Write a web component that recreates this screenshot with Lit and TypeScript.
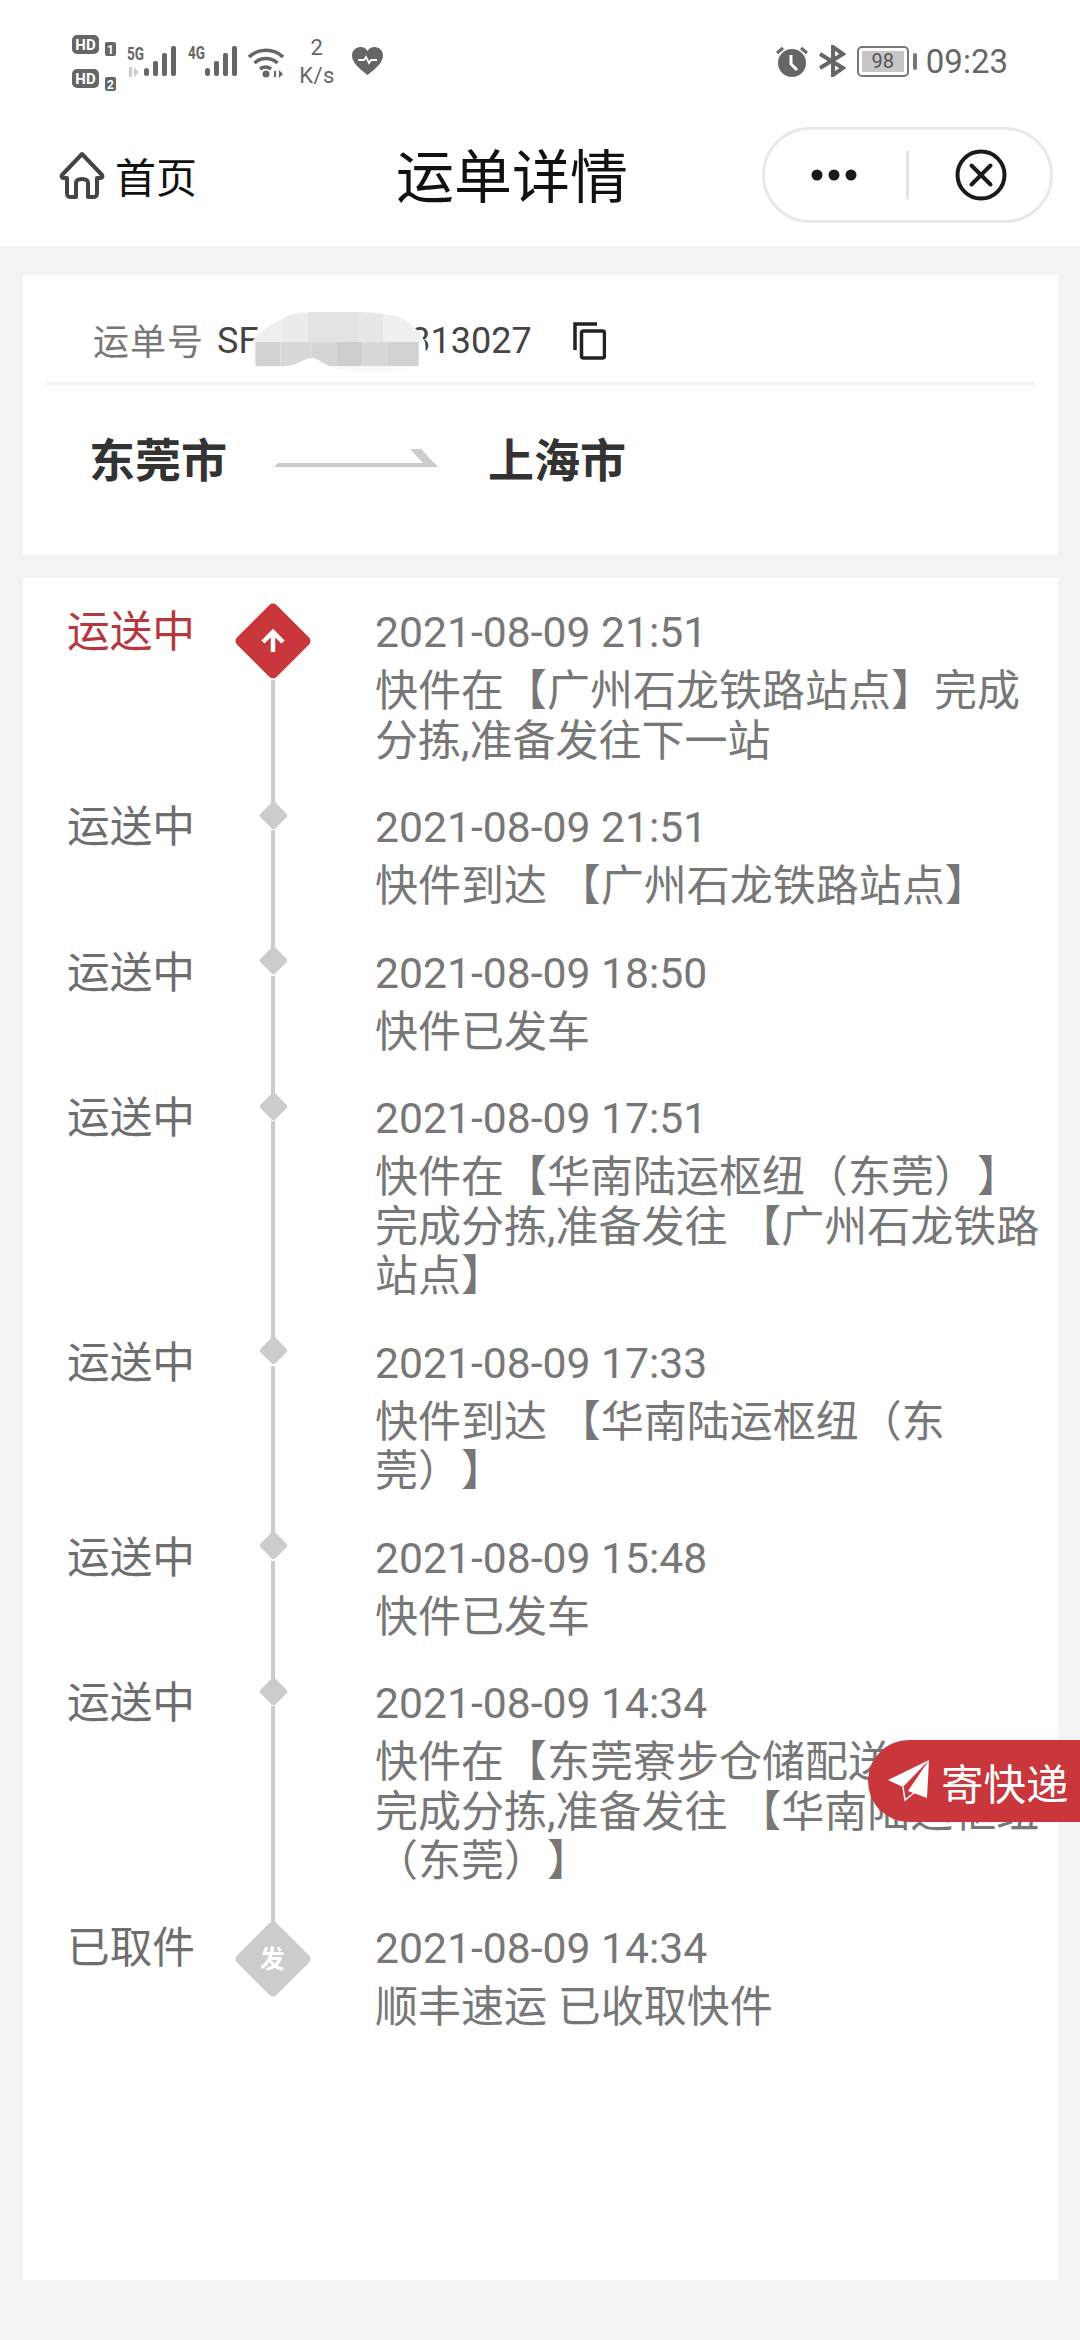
import { LitElement, html, css, svg } from "lit";
import { customElement } from "lit/decorators.js";

type Step = { status: string; time: string; desc: string; kind?: "active" | "origin" };

const STEPS: Step[] = [
  { status: "运送中", time: "2021-08-09 21:51", desc: "快件在【广州石龙铁路站点】完成分拣,准备发往下一站", kind: "active" },
  { status: "运送中", time: "2021-08-09 21:51", desc: "快件到达 【广州石龙铁路站点】" },
  { status: "运送中", time: "2021-08-09 18:50", desc: "快件已发车" },
  { status: "运送中", time: "2021-08-09 17:51", desc: "快件在【华南陆运枢纽（东莞）】完成分拣,准备发往 【广州石龙铁路站点】" },
  { status: "运送中", time: "2021-08-09 17:33", desc: "快件到达 【华南陆运枢纽（东莞）】" },
  { status: "运送中", time: "2021-08-09 15:48", desc: "快件已发车" },
  { status: "运送中", time: "2021-08-09 14:34", desc: "快件在【东莞寮步仓储配送中心】完成分拣,准备发往 【华南陆运枢纽（东莞）】" },
  { status: "已取件", time: "2021-08-09 14:34", desc: "顺丰速运 已收取快件", kind: "origin" },
];

const bars = () => svg`
  <rect x="0" y="22" width="5" height="8" rx="2.500"/>
  <rect x="9" y="15" width="5" height="15" rx="2"/>
  <rect x="18" y="7" width="5" height="23" rx="2"/>
  <rect x="27" y="0" width="5" height="30" rx="2"/>`;

@customElement("app-root")
export class AppRoot extends LitElement {
  static styles = css`
    :host {
      display: block;
      position: relative;
      width: 1080px;
      height: 2340px;
      overflow: hidden;
      background: #f3f3f3;
      font-family: Roboto, "Noto Sans CJK SC", sans-serif;
      text-spacing-trim: space-all;
    }
    .top { background: #fff; height: 246px; }
    .status {
      height: 110px;
      display: flex;
      align-items: flex-start;
      padding-left: 71px;
      box-sizing: border-box;
      color: #666;
    }
    .status svg { display: block; flex: none; fill: #666; }
    .sims { margin-top: 34px; }
    .wifi { margin: 45px 0 0 9px; }
    .speed {
      width: 60px;
      margin: 34px 0 0 3px;
      text-align: center;
      font-size: 22px;
      line-height: 28px;
      letter-spacing: 0.5px;
    }
    .heart { margin: 47px 0 0 5px; }
    .status-right { margin-left: auto; margin-right: 72px; display: flex; align-items: center; height: 122px; }
    .alarm { margin-right: 11px; }
    .bt { margin-right: 11px; }
    .battery {
      width: 52px;
      height: 31px;
      box-sizing: border-box;
      border: 2.5px solid #777;
      border-radius: 5px;
      padding: 3px;
      display: flex;
    }
    .battery span {
      flex: 1;
      background: #c6c6c6;
      border-radius: 1px;
      font-size: 20px;
      line-height: 20px;
      text-align: center;
      color: #555;
    }
    .nub { width: 4px; height: 17px; background: #777; border-radius: 2px; margin: 0 9px 0 4px; }
    .clock { font-size: 33px; color: #666; }

    .nav { height: 136px; display: flex; align-items: center; padding-left: 59px; }
    .home {
      display: flex;
      align-items: center;
      gap: 10px;
      width: 138px;
      font-size: 41px;
      color: #111;
      margin-bottom: 6px;
    }
    .home svg { display: block; }
    .title { margin-left: 199px; font-size: 58px; color: #111; line-height: 80px; }
    .capsule {
      margin-left: auto;
      margin-right: 27px;
      margin-bottom: 6px;
      width: 291px;
      height: 96px;
      box-sizing: border-box;
      border: 3px solid #e8e8e8;
      border-radius: 48px;
      display: flex;
      align-items: center;
    }
    .capsule svg { display: block; }
    .dots { margin-left: 46px; }
    .sep { width: 3px; height: 48px; background: #e3e3e3; margin-left: 49px; }
    .close { margin-left: 46px; }

    .card { background: #fff; margin: 0 22px 0 23px; }
    .head { margin-top: 29px; height: 280px; }
    .bill {
      height: 83px;
      margin: 0 23px;
      padding: 24px 0 0 47px;
      border-bottom: 3px solid #f1f1f1;
      display: flex;
      align-items: center;
      font-size: 36px;
      color: #444;
    }
    .bill-label { color: #777; font-size: 36px; letter-spacing: 1px; margin: 0 13px 3px 0; }
    .redact { position: relative; width: 152px; height: 40px; flex: none; }
    .blob { position: absolute; left: -11px; top: -9px; display: block; }
    .copy { display: block; margin-left: 41px; }
    .route {
      display: flex;
      align-items: center;
      padding: 0 0 0 66px;
      height: 144px;
      font-size: 46px;
      font-weight: 700;
      color: #333;
    }
    .route svg { display: block; margin: 8px 50px 0 47px; }

    .flow { margin-top: 23px; height: 1702px; padding-top: 30px; box-sizing: border-box; }
    .row {
      display: grid;
      grid-template-columns: 44px 160px 148px 1fr;
      color: #777;
      font-size: 42.67px;
      line-height: 49.5px;
    }
    .label { grid-column: 2; color: #6e6e6e; white-space: nowrap; }
    .active .label { color: #b5383e; }
    .axis { grid-column: 3; display: flex; flex-direction: column; align-items: center; width: 0; margin-left: 46px; }
    .mark { flex: none; display: flex; align-items: center; justify-content: center; }
    .mark.small { width: 30px; height: 30px; margin-top: -3px; }
    .mark.big { width: 78px; height: 78px; margin-top: -6px; }
    .mark.origin { margin-top: -4px; }
    .mark i { display: block; background: #ccc; transform: rotate(45deg); border-radius: 3px; flex: none; }
    .mark.small i { width: 21px; height: 21px; }
    .mark.big i {
      width: 56px;
      height: 56px;
      border-radius: 5px;
      display: flex;
      align-items: center;
      justify-content: center;
    }
    .active .mark.big i { background: #c9363b; }
    .mark b {
      transform: rotate(-45deg);
      color: #fff;
      font-size: 25px;
      font-weight: 700;
      line-height: 25px;
      font-style: normal;
    }
    .mark svg { display: block; transform: rotate(-45deg); }
    .line { width: 4px; flex: 1; background: #ccc; }
    .text { grid-column: 4; padding: 0 12px 37px 0; }
    .desc { margin-top: 9.5px; font-size: 43px; }

    .send {
      position: absolute;
      left: 868px;
      top: 1740px;
      width: 212px;
      height: 82px;
      background: #c9363b;
      border-radius: 41px 0 0 41px;
      display: flex;
      align-items: center;
      padding-left: 20px;
      box-sizing: border-box;
      color: #fff;
      font-size: 42.5px;
      gap: 11px;
    }
    .send svg { display: block; flex: none; }
  `;

  private renderStep(s: Step, i: number) {
    const last = i === STEPS.length - 1;
    const mark =
      s.kind === "active"
        ? html`<div class="mark big"><i><svg width="30" height="30" viewBox="0 0 30 30" fill="none" stroke="#fff" stroke-width="4.5"><path d="M15 26V6M5 16L15 6l10 10"/></svg></i></div>`
        : s.kind === "origin"
        ? html`<div class="mark big origin"><i><b>发</b></i></div>`
        : html`<div class="mark small"><i></i></div>`;
    return html`
      <div class="row ${s.kind ?? ""}">
        <div class="label">${s.status}</div>
        <div class="axis">${mark}${last ? "" : html`<div class="line"></div>`}</div>
        <div class="text"><div>${s.time}</div><div class="desc">${s.desc}</div></div>
      </div>`;
  }

  render() {
    return html`
      <div class="top">
        <div class="status">
          <svg class="sims" width="168" height="58" viewBox="0 0 168 58">
            <rect x="1" y="1" width="27" height="19" rx="5"/>
            <text x="14.500" y="16" text-anchor="middle" font-family="Roboto" font-weight="700" font-size="15" fill="#fff">HD</text>
            <rect x="34" y="8" width="11" height="14" rx="2"/>
            <text x="39.500" y="19.500" text-anchor="middle" font-family="Roboto" font-weight="700" font-size="12" fill="#fff">1</text>
            <rect x="1" y="35" width="27" height="19" rx="5"/>
            <text x="14.500" y="50" text-anchor="middle" font-family="Roboto" font-weight="700" font-size="15" fill="#fff">HD</text>
            <rect x="34" y="43" width="11" height="14" rx="2"/>
            <text x="39.500" y="54.500" text-anchor="middle" font-family="Roboto" font-weight="700" font-size="12" fill="#fff">2</text>
            <text x="56" y="26" font-family="Roboto" font-weight="700" font-size="19" textLength="17" lengthAdjust="spacingAndGlyphs">5G</text>
            <path d="M58 33h3v10h-3zM63 33l5 5-5 5z" fill="#ccc"/>
            <g transform="translate(73 12)">${bars()}</g>
            <text x="117" y="25" font-family="Roboto" font-weight="700" font-size="19" textLength="17" lengthAdjust="spacingAndGlyphs">4G</text>
            <g transform="translate(134 12)">${bars()}</g>
          </svg>
          <svg class="wifi" width="36" height="34" viewBox="0 0 36 34">
            <path d="M1 12a25 25 0 0 1 34 0M6.500 18a17 17 0 0 1 23 0M12 24a9 9 0 0 1 11 0" fill="none" stroke="#666" stroke-width="3.500"/>
            <circle cx="18" cy="29" r="3.500"/>
            <path d="M26 26h2v6h-2zM31 25l4 4-4 4z"/>
          </svg>
          <div class="speed">2<br />K/s</div>
          <svg class="heart" width="31" height="28" viewBox="0 0 31 28">
            <path d="M15.500 28C8 22 0 16 0 8.500 0 3.500 4 0 8.500 0c3 0 5.500 1.500 7 4 1.500-2.500 4-4 7-4C27 0 31 3.500 31 8.500 31 16 23 22 15.500 28z"/>
            <path d="M6 13h6l2-3 3 6 2-3h6" fill="none" stroke="#fff" stroke-width="1.800"/>
          </svg>
          <div class="status-right">
            <svg class="alarm" width="32" height="31" viewBox="0 0 32 31">
              <circle cx="16" cy="17" r="14"/>
              <path d="M1 7l6-5M31 7l-6-5" stroke="#666" stroke-width="3" fill="none"/>
              <path d="M15 9v9l6 6" stroke="#fff" stroke-width="3" fill="none"/>
            </svg>
            <svg class="bt" width="27" height="32" viewBox="0 0 27 32">
              <path d="M1 9l23 14-10 7V2l10 7L1 23" fill="none" stroke="#666" stroke-width="4"/>
            </svg>
            <div class="battery"><span>98</span></div>
            <div class="nub"></div>
            <div class="clock">09:23</div>
          </div>
        </div>
        <div class="nav">
          <div class="home">
            <svg width="46" height="48" viewBox="0 0 46 48" fill="none" stroke="#444" stroke-width="4" stroke-linejoin="round">
              <path d="M23 3L3 24c-1 2 0 3 2 3h3v15c0 3 1 4 4 4h5V32c0-3 2-4 6-4s6 1 6 4v14h5c3 0 4-1 4-4V27h3c2 0 3-1 2-3z"/>
            </svg>
            <span>首页</span>
          </div>
          <div class="title">运单详情</div>
          <div class="capsule">
            <svg class="dots" width="46" height="12" viewBox="0 0 46 12" fill="#1a1a1a">
              <circle cx="6" cy="6" r="5.500"/><circle cx="23" cy="6" r="5.500"/><circle cx="40" cy="6" r="5.500"/>
            </svg>
            <div class="sep"></div>
            <svg class="close" width="52" height="52" viewBox="0 0 52 52" fill="none" stroke="#1a1a1a" stroke-width="4">
              <circle cx="26" cy="26" r="23.500"/>
              <path d="M16.500 16.500l19 19M35.500 16.500l-19 19" stroke-linecap="round"/>
            </svg>
          </div>
        </div>
      </div>

      <div class="card head">
        <div class="bill">
          <span class="bill-label">运单号</span>
          <span>SF</span>
          <span class="redact">
            <svg class="blob" width="180" height="62" viewBox="0 0 172 62" preserveAspectRatio="none">
              <defs>
                <clipPath id="blob"><path d="M3 32C14 16 30 8 44 2c20-4 70-4 100 2 12 6 20 14 26 26 2 10 0 20-6 24-16 6-50 8-74 4-10-2-18-8-26-12-10 0-14 6-24 8-18 4-32 4-38-6-4-6-4-10-5-16z"/></clipPath>
              </defs>
              <g clip-path="url(#blob)">
                <rect width="172" height="62" fill="#fff"/>
                <rect y="0" width="34" height="30" fill="#efefef"/>
                <rect x="34" y="0" width="24" height="30" fill="#ebebeb"/>
                <rect x="58" y="0" width="48" height="30" fill="#e3e3e3"/>
                <rect x="106" y="0" width="24" height="30" fill="#e7e7e7"/>
                <rect x="130" y="0" width="42" height="30" fill="#f0f0f0"/>
                <rect x="8" y="30" width="24" height="24" fill="#d2d2d2"/>
                <rect x="32" y="30" width="30" height="24" fill="#d8d8d8"/>
                <rect x="62" y="30" width="24" height="24" fill="#d6d6d6"/>
                <rect x="86" y="30" width="24" height="24" fill="#cecece"/>
                <rect x="110" y="30" width="24" height="24" fill="#d8d8d8"/>
                <rect x="134" y="30" width="30" height="24" fill="#d2d2d2"/>
                <rect y="54" width="172" height="8" fill="#f9f9f9"/>
              </g>
            </svg>
          </span>
          <span>313027</span>
          <svg class="copy" width="33" height="38" viewBox="0 0 33 38" fill="none" stroke="#222" stroke-width="3.500">
            <path d="M24 2H2v26"/>
            <rect x="8.500" y="9" width="23" height="27" rx="2"/>
          </svg>
        </div>
        <div class="route">
          <span>东莞市</span>
          <svg width="164" height="24" viewBox="0 0 164 24"><path d="M0 18h164L147 0h-11l13 14H4z" fill="#ccc"/></svg>
          <span>上海市</span>
        </div>
      </div>

      <div class="card flow">${STEPS.map((s, i) => this.renderStep(s, i))}</div>

      <div class="send">
        <svg width="42" height="42" viewBox="0 0 42 42" fill="#fff">
          <path d="M41 0L0 20l15 7zM41 0L20 31l19 7z"/>
          <path d="M15 27l2 13 10-8" fill="none" stroke="#fff" stroke-width="1.500"/>
        </svg>
        <span>寄快递</span>
      </div>
    `;
  }
}
